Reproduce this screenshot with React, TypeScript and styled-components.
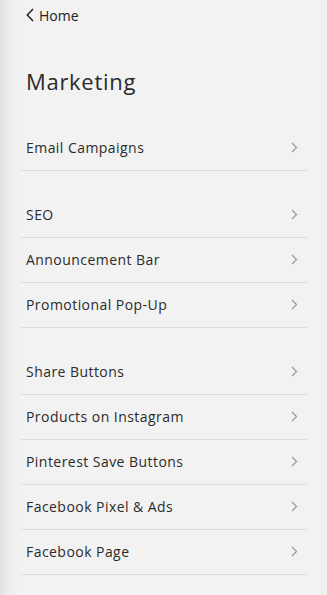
import React from "react";
import styled, { createGlobalStyle } from "styled-components";

const Global = createGlobalStyle`
  html, body { margin: 0; padding: 0; background: #f2f2f2; }
  * { box-sizing: border-box; }
`;

const Panel = styled.div`
  min-height: 595px;
  width: 327px;
  padding: 0 20px 0 21px;
  background: linear-gradient(to right, #e3e3e3 0px, #ebebeb 8px, #f0f0f0 16px, #f2f2f2 22px, #f2f2f2 318px, #f0f0f0 322px, #f2f2f2 327px);
  font-family: "Open Sans", "Liberation Sans", sans-serif;
  color: #2b2b2b;
`;

const Back = styled.div`
  height: 30px;
  display: flex;
  align-items: center;
  gap: 5px;
  padding-left: 5px;
  font-size: 14px;
  color: #222;
`;

const Title = styled.h1`
  margin: 36px 0 30px 5px;
  height: 30px;
  line-height: 30px;
  font-size: 22px;
  font-weight: 400;
  letter-spacing: 0.7px;
  color: #2a2a2a;
`;

const Section = styled.div<{ $gap?: boolean }>`
  display: flex;
  flex-direction: column;
  margin-top: ${(p) => (p.$gap ? "22px" : "0")};
`;

const Row = styled.div`
  height: 45px;
  display: flex;
  align-items: center;
  justify-content: space-between;
  padding: 0 9px 1px 5px;
  border-bottom: 1px solid #dcdcdc;
  font-size: 14px;
  letter-spacing: 0.45px;
  color: #2b2b2b;
`;

const Chevron = () => (
  <svg width="7" height="11" viewBox="0 0 7 11">
    <path d="M1 1 L5.5 5.5 L1 10" fill="none" stroke="#9a9a9a" strokeWidth="1.3" />
  </svg>
);

const BackChevron = () => (
  <svg width="8" height="14" viewBox="0 0 8 14">
    <path d="M7 1 L1.3 7 L7 13" fill="none" stroke="#222" strokeWidth="1.5" />
  </svg>
);

const sections = [
  ["Email Campaigns"],
  ["SEO", "Announcement Bar", "Promotional Pop-Up"],
  ["Share Buttons", "Products on Instagram", "Pinterest Save Buttons", "Facebook Pixel & Ads", "Facebook Page"],
];

export default function App() {
  return (
    <>
      <Global />
      <Panel>
        <Back>
          <BackChevron />
          <span>Home</span>
        </Back>
        <Title>Marketing</Title>
        {sections.map((items, i) => (
          <Section key={i} $gap={i > 0}>
            {items.map((label) => (
              <Row key={label}>
                <span>{label}</span>
                <Chevron />
              </Row>
            ))}
          </Section>
        ))}
      </Panel>
    </>
  );
}
